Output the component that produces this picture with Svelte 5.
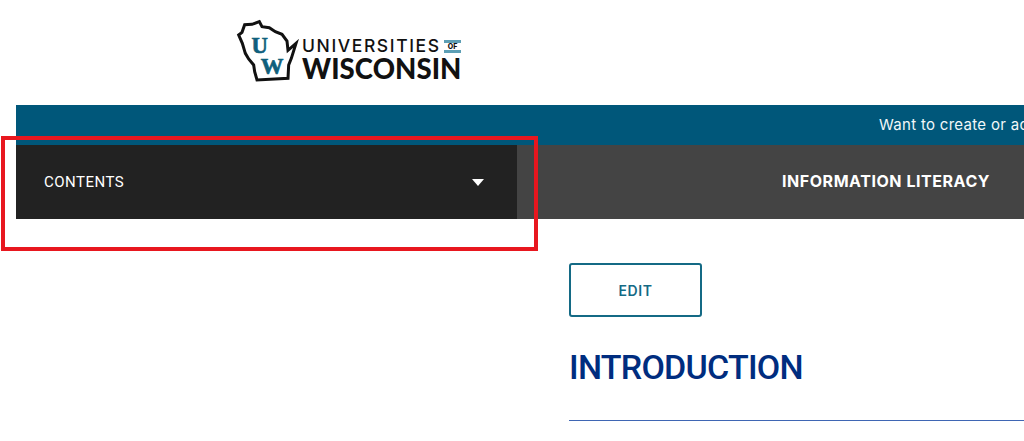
<script>
  const message = 'Want to create or adapt books like this? Learn more about how Pressbooks supports open publishing practices.';
</script>

<div class="page">
  <header class="brand">
    <svg class="mark" viewBox="0 0 210 216" aria-hidden="true">
      <path class="state" d="M20 60 L30 52 L38 29 L60 28 L82 20 L90 35 L112 38 L130 50 L150 58 L165 78 L168 106 L192 85 L178 130 L170 150 L168 190 L75 195 L68 170 L65 150 L50 132 L40 115 L31 85 Z"/>
      <text class="uw" x="83" y="113" text-anchor="middle">U</text>
      <text class="uw" x="120" y="178" text-anchor="middle">W</text>
    </svg>
    <div class="wordmark">
      <div class="top">
        <span class="universities">UNIVERSITIES</span>
        <span class="of">OF</span>
      </div>
      <div class="wisconsin">WISCONSIN</div>
    </div>
  </header>

  <div class="banner"><span>{message}</span></div>

  <nav class="bar">
    <div class="contents">
      <span>CONTENTS</span>
      <i class="caret"></i>
    </div>
    <div class="title">INFORMATION LITERACY</div>
  </nav>

  <main class="layout">
    <div class="side"></div>
    <section class="content">
      <button class="edit">EDIT</button>
      <h1>INTRODUCTION</h1>
      <hr />
    </section>
  </main>

  <div class="annotation"></div>
</div>

<style>
  :global(body) {
    margin: 0;
    background: #fff;
    overflow: hidden;
  }
  .page {
    position: relative;
    width: 1024px;
    height: 441px;
    padding-left: 16px;
    box-sizing: border-box;
    overflow: hidden;
    font-family: "Inter", "Liberation Sans", sans-serif;
  }
  .brand {
    height: 105px;
    box-sizing: border-box;
    display: flex;
    align-items: flex-start;
    padding: 15px 0 0 216px;
  }
  .mark {
    width: 70px;
    height: 72px;
    flex: none;
  }
  .state {
    fill: #fff;
    stroke: #111;
    stroke-width: 9;
    stroke-linejoin: miter;
  }
  .uw {
    font-family: "Liberation Serif", serif;
    font-weight: 700;
    font-size: 68px;
    fill: #0f5f7c;
    stroke: #0f5f7c;
    stroke-width: 2;
  }
  .wordmark {
    color: #111;
    padding-top: 23px;
    line-height: 1;
  }
  .top {
    display: flex;
    align-items: center;
    justify-content: space-between;
    width: 159px;
    height: 16px;
  }
  .universities {
    font-family: "Inter", sans-serif;
    font-size: 17.5px;
    font-weight: 500;
    letter-spacing: 1.6px;
    white-space: nowrap;
  }
  .of {
    font-family: "Inter", sans-serif;
    font-size: 7px;
    font-weight: 800;
    width: 17px;
    flex: none;
    text-align: center;
    border-top: 3px solid #5d9fb5;
    border-bottom: 3px solid #5d9fb5;
    line-height: 7px;
  }
  .wisconsin {
    font-family: "Lato", sans-serif;
    font-size: 27.5px;
    font-weight: 900;
    letter-spacing: 0.1px;
    line-height: 24px;
    margin-top: 3px;
  }
  .banner {
    height: 40px;
    background: #00577a;
    color: #f2f7f9;
    font-size: 15px;
    line-height: 40px;
    padding-left: 863px;
    white-space: nowrap;
    letter-spacing: 0.3px;
    overflow: hidden;
  }
  .bar {
    display: flex;
    height: 74px;
    background: #444;
  }
  .contents {
    width: 501px;
    box-sizing: border-box;
    background: #222;
    color: #fff;
    display: flex;
    align-items: center;
    justify-content: space-between;
    padding: 0 33px 0 28px;
    font-family: "Roboto", sans-serif;
    font-size: 15px;
    letter-spacing: 0.5px;
  }
  .caret {
    width: 0;
    height: 0;
    border-left: 6px solid transparent;
    border-right: 6px solid transparent;
    border-top: 7px solid #fff;
  }
  .title {
    padding-left: 265px;
    line-height: 73px;
    color: #fff;
    font-size: 16px;
    font-weight: 700;
    letter-spacing: 0.55px;
    white-space: nowrap;
  }
  .layout {
    display: flex;
  }
  .side {
    width: 553px;
    flex: none;
  }
  .content {
    flex: 1;
    padding-top: 44px;
  }
  .edit {
    display: block;
    width: 133px;
    height: 54px;
    background: #fff;
    border: 2px solid #146a85;
    border-radius: 3px;
    color: #146a85;
    font-family: "Inter", sans-serif;
    font-size: 14px;
    font-weight: 600;
    letter-spacing: 0.6px;
    padding: 0;
  }
  h1 {
    margin: 30px 0 0;
    font-family: "Roboto", sans-serif;
    font-size: 34px;
    font-weight: 500;
    line-height: 40px;
    letter-spacing: -0.75px;
    color: #002d7f;
  }
  hr {
    margin: 33px 0 0;
    border: 0;
    height: 1px;
    background: #3f66b4;
  }
  .annotation {
    position: absolute;
    left: 1px;
    top: 136px;
    width: 537px;
    height: 115px;
    box-sizing: border-box;
    border: 4px solid #e8171f;
    pointer-events: none;
  }
</style>
